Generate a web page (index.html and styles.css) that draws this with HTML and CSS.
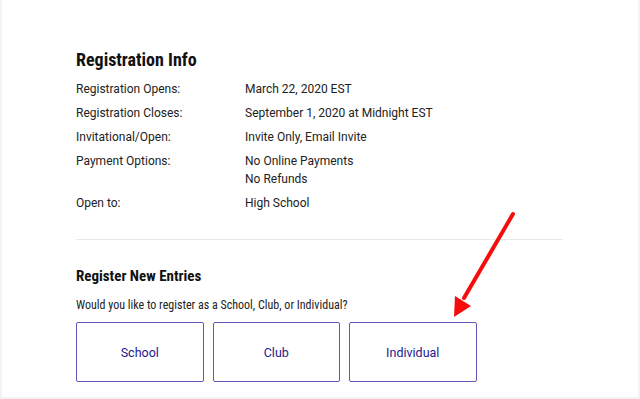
FILE: index.html
```html
<!DOCTYPE html>
<html lang="en">
<head>
  <meta charset="UTF-8" />
  <title>Registration Info</title>
  <link rel="stylesheet" href="styles.css">
</head>
<body>
  <main class="card">
    <section class="info">
      <h2>Registration Info</h2>
      <dl class="details">
        <div class="row"><dt>Registration Opens:</dt><dd>March 22, 2020 EST</dd></div>
        <div class="row"><dt>Registration Closes:</dt><dd>September 1, 2020 at Midnight EST</dd></div>
        <div class="row"><dt>Invitational/Open:</dt><dd>Invite Only, Email Invite</dd></div>
        <div class="row"><dt>Payment Options:</dt><dd>No Online Payments<br>No Refunds</dd></div>
        <div class="row"><dt>Open to:</dt><dd>High School</dd></div>
      </dl>
    </section>

    <hr class="divider">

    <section class="register">
      <h3>Register New Entries</h3>
      <p class="question">Would you like to register as a School, Club, or Individual?</p>
      <div class="choices">
        <button class="choice">School</button>
        <button class="choice">Club</button>
        <button class="choice">Individual</button>
      </div>
    </section>

    <!-- annotation arrow -->
    <svg class="arrow" width="80" height="120" viewBox="0 0 80 120">
      <line x1="73" y1="14" x2="24" y2="98" stroke="#f50d0d" stroke-width="4" stroke-linecap="round"/>
      <polygon points="14,117 15,96 31,106" fill="#f50d0d"/>
    </svg>
  </main>
</body>
</html>
```

FILE: styles.css
```css
body {
  margin: 0;
  background-color: #f3f3f3;
  font-family: Roboto, 'Liberation Sans', sans-serif;
  color: #222;
}

.card {
  position: relative;
  background-color: #fff;
  margin: 0 2px;
  height: 397px;
  padding: 0 74px;
  box-sizing: border-box;
  overflow: hidden;
}

.info {
  padding-top: 48px;
}

h2 {
  margin: 0 0 8px;
  font-size: 18px;
  line-height: 24px;
  font-weight: 700;
  font-stretch: condensed;
  color: #111;
}

.details {
  margin: 0;
  font-size: 12px;
  line-height: 18px;
}

.row {
  display: flex;
  margin-bottom: 6px;
}

dt {
  width: 169px;
  flex-shrink: 0;
}

dd {
  margin: 0;
}

.divider {
  border: none;
  border-top: 1px solid #e9e9e9;
  margin: 27px 0 0;
  width: 487px;
}

.register {
  padding-top: 26px;
}

h3 {
  margin: 0 0 11px;
  font-size: 15px;
  line-height: 20px;
  font-weight: 700;
  font-stretch: condensed;
  color: #111;
}

.question {
  margin: 0 0 9px;
  font-size: 12px;
  line-height: 16px;
  font-stretch: condensed;
}

.choices {
  display: flex;
  gap: 9px;
}

.choice {
  width: 127.5px;
  height: 60px;
  background: #fff;
  border: 1.5px solid #6656b8;
  border-radius: 2px;
  color: #231a8c;
  font-family: Roboto, 'Liberation Sans', sans-serif;
  font-size: 12.5px;
  cursor: pointer;
}

.arrow {
  position: absolute;
  left: 438px;
  top: 200px;
}
```
